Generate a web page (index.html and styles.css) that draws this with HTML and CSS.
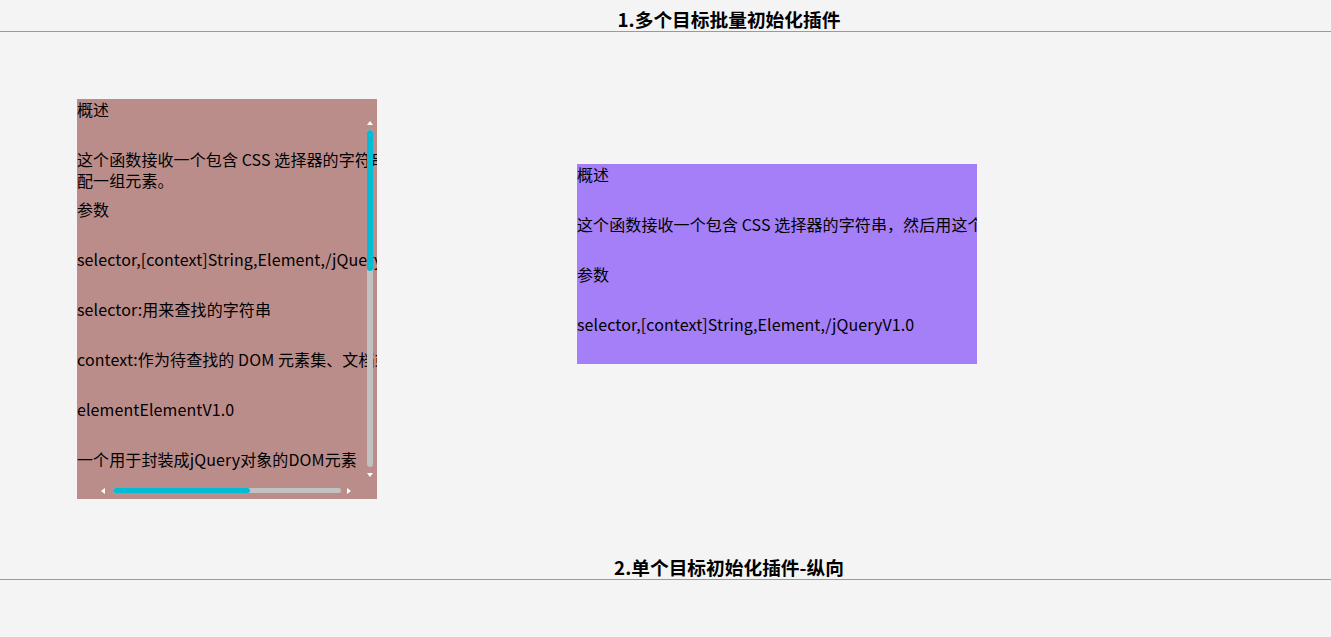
FILE: index.html
```html
<!DOCTYPE html>
<html lang="zh-CN">
<head>
<meta charset="utf-8">
<title>滚动条插件</title>
<link rel="stylesheet" href="styles.css">
</head>
<body>
<h3 class="title">1.多个目标批量初始化插件</h3>
<div class="row">
  <div class="box box-a">
    <div class="content">
      <p>概述</p>
      <p>这个函数接收一个包含 CSS 选择器的字符串，然后用这个字符串去匹配一组元素。</p>
      <p>参数</p>
      <p>selector,[context]String,Element,/jQueryV1.0</p>
      <p>selector:用来查找的字符串</p>
      <p>context:作为待查找的 DOM 元素集、文档或 jQuery 对象。</p>
      <p>elementElementV1.0</p>
      <p>一个用于封装成jQuery对象的DOM元素</p>
    </div>
    <div class="vbar">
      <span class="arrow arrow-up"></span>
      <div class="vtrack"><div class="vthumb"></div></div>
      <span class="arrow arrow-down"></span>
    </div>
    <div class="hbar">
      <span class="arrow arrow-left"></span>
      <div class="htrack"><div class="hthumb"></div></div>
      <span class="arrow arrow-right"></span>
    </div>
  </div>
  <div class="box box-b">
    <div class="content content-wide">
      <p>概述</p>
      <p>这个函数接收一个包含 CSS 选择器的字符串，然后用这个字符串去匹配一组元素。</p>
      <p>参数</p>
      <p>selector,[context]String,Element,/jQueryV1.0</p>
      <p>selector:用来查找的字符串</p>
      <p>context:作为待查找的 DOM 元素集、文档或 jQuery 对象。</p>
    </div>
  </div>
</div>
<h3 class="title">2.单个目标初始化插件-纵向</h3>
</body>
</html>
```
FILE: styles.css
```css
html, body {
  margin: 0;
  padding: 0;
  background: #f4f4f4;
  font-family: "Noto Sans CJK SC", "Noto Sans", sans-serif;
  color: #000;
  font-size: 16px;
}
.title {
  margin: 0;
  box-sizing: border-box;
  width: 100%;
  padding: 6px 0 0 127px;
  height: 32px;
  line-height: 25px;
  font-size: 18.72px;
  font-weight: bold;
  text-align: center;
  border-bottom: 1px solid #9a9a9a;
  color: #000;
}
.row {
  display: flex;
  align-items: flex-start;
  padding-left: 77px;
  gap: 200px;
  height: 516px;
}
.box {
  position: relative;
  overflow: hidden;
  flex: none;
}
.box-a {
  width: 300px;
  height: 400px;
  margin-top: 67px;
  background: #bb8d8a;
}
.box-b {
  width: 400px;
  height: 200px;
  margin-top: 132px;
  background: #a57ff7;
}
.content {
  width: 488px;
  letter-spacing: 0.1px;
}
.content-wide {
  width: 900px;
}
.content p {
  margin: 0 0 29px;
  height: 21px;
  line-height: 21px;
  white-space: normal;
}
.vbar {
  position: absolute;
  right: 3px;
  top: 22px;
  bottom: 22px;
  width: 8px;
  display: flex;
  flex-direction: column;
  align-items: center;
}
.vtrack {
  flex: 1;
  width: 6px;
  margin: 5px 0 6px;
  background: #c2c2c2;
  border-radius: 3px;
  overflow: hidden;
}
.vthumb {
  height: 141px;
  background: #00bcd4;
  border-radius: 3px;
}
.hbar {
  position: absolute;
  left: 24px;
  right: 26px;
  bottom: 5px;
  height: 7px;
  display: flex;
  align-items: center;
}
.htrack {
  flex: 1;
  height: 5px;
  margin: 0 6px 0 8px;
  background: #c2c2c2;
  border-radius: 3px;
  overflow: hidden;
}
.hthumb {
  width: 137px;
  height: 100%;
  background: #00bcd4;
  border-radius: 3px;
}
.arrow {
  width: 0;
  height: 0;
  flex: none;
  border-style: solid;
  border-color: transparent;
}
.arrow-up {
  border-width: 0 3px 4px 3px;
  border-bottom-color: #fff;
}
.arrow-down {
  border-width: 4px 3px 0 3px;
  border-top-color: #fff;
}
.arrow-left {
  border-width: 3px 4px 3px 0;
  border-right-color: #fff;
}
.arrow-right {
  border-width: 3px 0 3px 4px;
  border-left-color: #fff;
}
```
